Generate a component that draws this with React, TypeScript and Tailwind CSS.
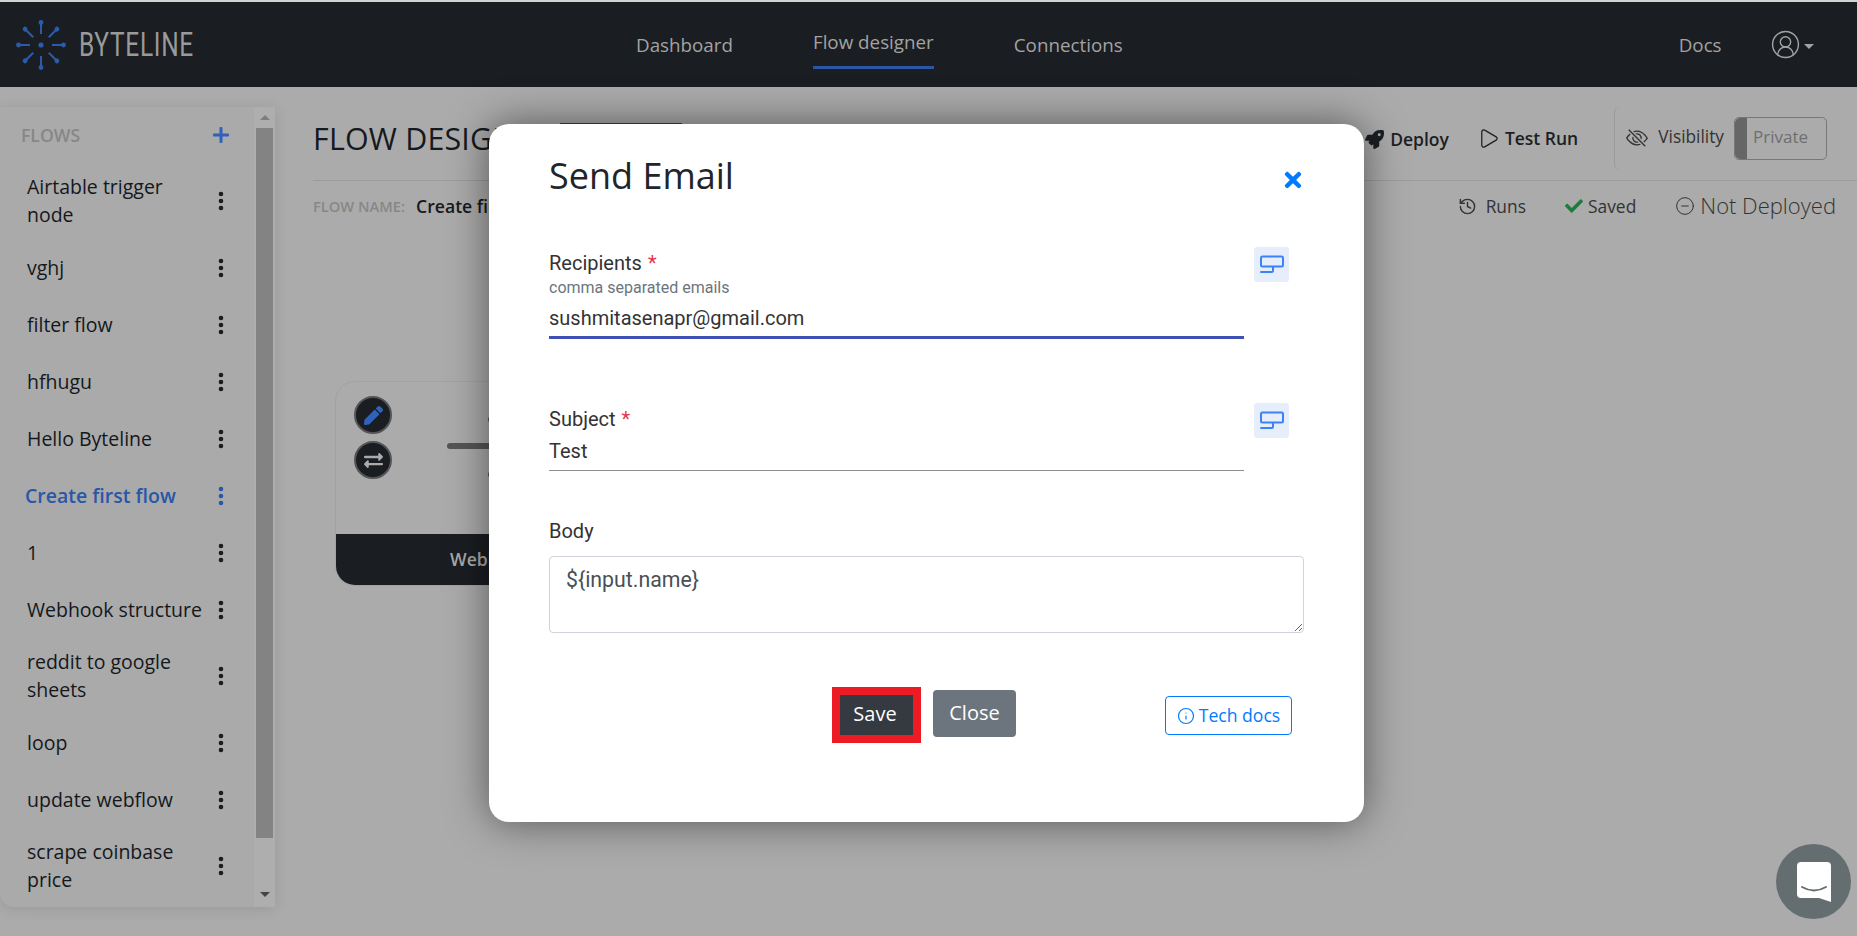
import React from 'react';
import { CircleMinus, CircleUserRound, History, Info, Play } from 'lucide-react';
import { BsEyeSlash } from 'react-icons/bs';
import { FaCheck, FaExchangeAlt, FaPen, FaRocket, FaTimes } from 'react-icons/fa';

const flows = [
  { name: 'Airtable trigger node', tall: true },
  { name: 'vghj' },
  { name: 'filter flow' },
  { name: 'hfhugu' },
  { name: 'Hello Byteline' },
  { name: 'Create first flow', active: true },
  { name: '1' },
  { name: 'Webhook structure' },
  { name: 'reddit to google sheets', tall: true },
  { name: 'loop' },
  { name: 'update webflow' },
  { name: 'scrape coinbase price', tall: true },
];

const Dots = ({ color = '#1c1c1c' }: { color?: string }) => (
  <svg width="6" height="20" viewBox="0 0 6 20" fill={color}>
    <circle cx="3" cy="3" r="2.3" />
    <circle cx="3" cy="10" r="2.3" />
    <circle cx="3" cy="17" r="2.3" />
  </svg>
);

const Logo = () => {
  const spokes = [0, 45, 90, 135, 180, 225, 270, 315];
  return (
    <svg width="52" height="52" viewBox="0 0 52 52" fill="#2a5cab">
      <circle cx="26" cy="26" r="2.6" />
      {spokes.map((a) => (
        <g key={a} transform={`rotate(${a} 26 26)`}>
          <rect x="25" y="3" width="2" height="12" />
          <circle cx="26" cy="3.5" r="2.4" />
        </g>
      ))}
    </svg>
  );
};

const VariableButton = () => (
  <button className="flex h-[35px] w-[35px] items-center justify-center rounded-[3px] bg-[#e6eefc]">
    <svg width="24" height="20" viewBox="0 0 24 20" fill="none" stroke="#3b82f6" strokeWidth="2" strokeLinecap="round">
      <rect x="1" y="1.5" width="22" height="10" rx="1.5" />
      <path d="M13 12v3.5q0 1.5-1.5 1.5H1" />
    </svg>
  </button>
);

const Required = () => <span className="ml-[6px] text-[#e5344f]">*</span>;

const Sidebar = () => (
  <aside className="mt-5 flex h-[800px] w-[275px] shrink-0 rounded-bl-[14px] bg-[#aaaaaa] shadow-[0_2px_14px_rgba(0,0,0,0.1)]">
    <div className="w-[254px] shrink-0">
      <div className="flex h-[56px] items-end justify-between pb-[15px] pl-[21px] pr-[25px]">
        <span className="text-[17.6px] font-semibold text-[#878787]">FLOWS</span>
        <svg width="16" height="16" viewBox="0 0 16 16" fill="#2f62b8" className="mb-[5px]">
          <rect x="0" y="6.5" width="16" height="3" rx="1" />
          <rect x="6.5" y="0" width="3" height="16" rx="1" />
        </svg>
      </div>
      {flows.map((f) => (
        <div
          key={f.name}
          className={`flex items-center justify-between pr-[30px] ${f.tall ? 'h-[76px]' : 'h-[57px]'} ${f.active ? 'pl-[25px]' : 'pl-[27px]'}`}
        >
          <span
            className={`w-[180px] text-[19.5px] leading-[28px] ${f.active ? 'font-semibold text-[#2a56a8]' : 'text-[#14181c]'} ${f.name === 'Webhook structure' ? 'whitespace-nowrap' : ''}`}
          >
            {f.name}
          </span>
          <Dots color={f.active ? '#2a56a8' : '#1c1c1c'} />
        </div>
      ))}
    </div>
    <div className="flex w-[21px] flex-col items-center bg-[#aeaeae]">
      <div className="flex h-[21px] items-center justify-center">
        <div className="border-x-[5px] border-b-[5px] border-x-transparent border-b-[#7d7d7d]" />
      </div>
      <div className="h-[710px] w-[17px] bg-[#838383]" />
      <div className="flex flex-1 items-end justify-center pb-[10px]">
        <div className="border-x-[5px] border-t-[5px] border-x-transparent border-t-[#444444]" />
      </div>
    </div>
  </aside>
);

const Toolbar = () => (
  <div className="flex h-[94px] items-start justify-between border-b border-[#9b9ba0] pr-[30px]">
    <div className="flex items-center">
      <h1 className="mt-[28px] text-[30.4px] font-medium leading-[42px] tracking-[0.2px] text-[#16191d]">FLOW DESIGNER</h1>
      <div className="mt-[36px] ml-[9px] h-[40px] w-[122px] border-t border-[#0d4a93]" />
    </div>
    <div className="mt-5 flex items-start">
      <div className="mt-[19px] flex items-center gap-[6px] text-[17.5px] font-semibold text-[#1c1f22]">
        <FaRocket size={19} />
        <span>Deploy</span>
      </div>
      <div className="ml-[28px] mt-[18px] flex items-center gap-[5px] text-[17.5px] font-semibold text-[#1c1f22]">
        <Play size={23} strokeWidth={1.3} />
        <span>Test Run</span>
      </div>
      <div className="ml-[36px] flex h-[63px] items-center rounded-l-[6px] border-l border-[#999999] pl-[11px]">
        <BsEyeSlash size={22} className="mb-[2px] text-[#333333]" />
        <span className="mb-[4px] ml-[10px] text-[17.3px] text-[#333333]">Visibility</span>
        <div className="ml-[10px] flex h-[43px] w-[93px] items-center rounded-[5px] border border-[#777777]">
          <div className="h-full w-[12px] rounded-l-[5px] bg-[#666666]" />
          <span className="mb-[4px] ml-[6px] text-[17px] text-[#6f6f6f]">Private</span>
        </div>
      </div>
    </div>
  </div>
);

const StatusRow = () => (
  <div className="flex h-[50px] items-center justify-between pr-[21px]">
    <div className="flex items-center">
      <span className="text-[14.7px] font-semibold text-[#878787]">FLOW NAME:</span>
      <span className="ml-[11px] text-[17.6px] font-semibold text-[#16191d]">Create first flow</span>
    </div>
    <div className="flex items-center text-[#333333]">
      <History size={19} strokeWidth={1.8} />
      <span className="ml-[9px] text-[17.4px]">Runs</span>
      <FaCheck size={18} className="ml-[39px] text-[#1a7f3c]" />
      <span className="ml-[5px] text-[17.4px]">Saved</span>
      <CircleMinus size={20} strokeWidth={1.2} className="ml-[39px]" />
      <span className="mb-[2px] ml-[5px] text-[22px] font-light">Not Deployed</span>
    </div>
  </div>
);

const FlowNode = () => (
  <div className="absolute left-[60px] top-[294px] flex h-[205px] w-[300px] flex-col overflow-hidden rounded-[20px] border border-[#a2a2a2]">
    <div className="relative flex-1">
      <div className="absolute left-[18px] top-[14px] flex flex-col gap-[7px]">
        <div className="flex h-[38px] w-[38px] items-center justify-center rounded-full border-2 border-[#555555] bg-[#1a1d21] text-[#2f62b8]">
          <FaPen size={19} />
        </div>
        <div className="flex h-[38px] w-[38px] items-center justify-center rounded-full border-2 border-[#555555] bg-[#1a1d21] text-[#ababab]">
          <FaExchangeAlt size={19} />
        </div>
      </div>
      <div className="absolute left-[111px] top-[61px] h-[6px] w-[60px] rounded-full bg-[#555555]" />
      <div className="absolute left-[152px] top-[34px] h-[7px] w-[7px] rounded-full bg-[#555555]" />
      <div className="absolute left-[152px] top-[89px] h-[7px] w-[7px] rounded-full bg-[#555555]" />
    </div>
    <div className="flex h-[51px] items-center bg-[#1a1d21] pl-[114px] text-[17.6px] font-semibold text-[#aaaaaa]">Webhook</div>
  </div>
);

const SendEmailModal = () => (
  <div
    className="absolute left-[489px] top-[124px] h-[698px] w-[875px] rounded-[20px] bg-white pl-[60px] pr-[60px] shadow-[0_0_40px_rgba(0,0,0,0.5)]"
    style={{ fontFamily: 'Roboto, sans-serif' }}
  >
    <div className="flex items-start justify-between">
      <h2 className="mt-[28px] text-[36px] font-medium leading-[48px] text-[#212529]" style={{ fontFamily: '"Open Sans", sans-serif' }}>
        Send Email
      </h2>
      <FaTimes size={24} className="mr-[-1px] mt-[44px] text-[#007bff]" />
    </div>

    <div className="mt-[51px] flex items-start gap-[9px]">
      <div className="w-[695px]">
        <div className="text-[20px] leading-[24px] text-[#333333]">
          Recipients
          <Required />
        </div>
        <div className="mt-[3px] text-[16px] leading-[20px] text-[#6c757d]">comma separated emails</div>
        <div className="h-[41px] border-b-[3px] border-[#3f51b5] pt-[8px] text-[20px] leading-[24px] text-[#333333]">sushmitasenapr@gmail.com</div>
      </div>
      <div className="ml-[1px] mt-[-4px]">
        <VariableButton />
      </div>
    </div>

    <div className="mt-[68px] flex items-start gap-[9px]">
      <div className="w-[695px]">
        <div className="text-[20px] leading-[24px] text-[#333333]">
          Subject
          <Required />
        </div>
        <div className="mt-[8px] h-[32px] border-b border-[#8f8f8f] text-[20px] leading-[24px] text-[#333333]">Test</div>
      </div>
      <div className="ml-[1px] mt-[-4px]">
        <VariableButton />
      </div>
    </div>

    <div className="mt-[48px] text-[20px] leading-[24px] text-[#333333]">Body</div>
    <textarea
      readOnly
      value="${input.name}"
      className="mt-[13px] block h-[77px] w-[755px] rounded-[4px] border border-[#ced4da] px-[16px] py-[11px] text-[21.3px] leading-[24px] text-[#495057] outline-none"
    />

    <div className="relative mt-[54px] flex items-center">
      <div className="ml-[283px] border-[8px] border-[#ed1c24]">
        <button className="flex h-[40px] w-[73px] items-center justify-center bg-[#343a40] pb-[2px] pr-[3px] text-[20px] text-white" style={{ fontFamily: '"Open Sans", sans-serif' }}>
          Save
        </button>
      </div>
      <button className="mb-[3px] ml-[12px] h-[47px] w-[83px] rounded-[4px] bg-[#6c757d] pb-[1px] text-[20px] text-white" style={{ fontFamily: '"Open Sans", sans-serif' }}>
        Close
      </button>
      <button className="ml-[149px] mt-[1px] flex h-[39px] w-[127px] items-center justify-center gap-[4px] rounded-[4px] border border-[#007bff] text-[17.6px] text-[#007bff]" style={{ fontFamily: '"Open Sans", sans-serif' }}>
        <Info size={18} strokeWidth={1.6} />
        Tech docs
      </button>
    </div>
  </div>
);

const ChatBubble = () => (
  <div className="absolute bottom-[17px] right-[6px] flex h-[75px] w-[75px] items-center justify-center rounded-full bg-[#646d70]">
    <svg width="36" height="42" viewBox="0 0 36 42">
      <path d="M5 1h26a4 4 0 0 1 4 4v36l-12-4H5a4 4 0 0 1-4-4V5a4 4 0 0 1 4-4z" fill="#fff" />
      <path d="M6 26q12 7 24 0" fill="none" stroke="#646d70" strokeWidth="2" strokeLinecap="round" />
    </svg>
  </div>
);

export default function App() {
  return (
    <div className="relative flex h-screen w-full flex-col overflow-hidden bg-[#ababab]" style={{ fontFamily: '"Open Sans", sans-serif' }}>
      <div className="h-[2px] bg-[#d2d2d2]" />
      <header className="flex h-[85px] shrink-0 items-center bg-[#1a1d21] pl-[15px] text-[#a3a3a3]">
        <Logo />
        <span className="ml-[12px] w-[114px] origin-left scale-x-[0.72] whitespace-nowrap text-[34px] tracking-[1px] text-[#9a9a9a]" style={{ fontFamily: 'Roboto, sans-serif' }}>
          BYTELINE
        </span>
        <nav className="ml-[443px] mt-[7px] flex items-start text-[18.8px]">
          <a className="mt-[4px]">Dashboard</a>
          <a className="ml-[80px] mt-[1px] border-b-[3px] border-[#2a56a5] pb-[9px]">Flow designer</a>
          <a className="ml-[80px] mt-[4px]">Connections</a>
        </nav>
        <a className="ml-[556px] mt-[2px] text-[18.8px]">Docs</a>
        <div className="ml-[48px] flex items-center">
          <CircleUserRound size={31} strokeWidth={1.1} />
          <div className="ml-[3px] mt-[3px] border-x-[5px] border-t-[5px] border-x-transparent border-t-[#a3a3a3]" />
        </div>
      </header>
      <main className="flex flex-1">
        <Sidebar />
        <section className="relative flex-1 pl-[38px]">
          <Toolbar />
          <StatusRow />
          <FlowNode />
        </section>
      </main>
      <ChatBubble />
      <SendEmailModal />
    </div>
  );
}
